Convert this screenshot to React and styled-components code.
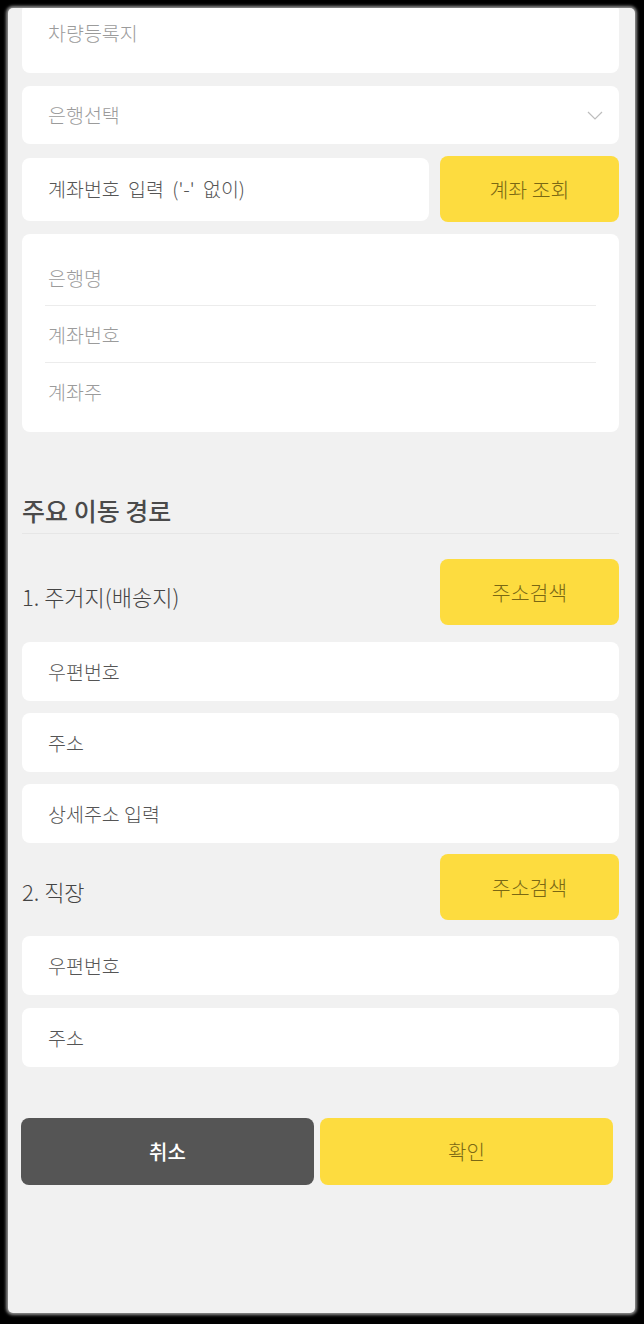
import React from "react";
import styled, { createGlobalStyle } from "styled-components";

const Global = createGlobalStyle`
  html, body { margin: 0; padding: 0; background: #000; }
  body { font-family: "Noto Sans CJK KR", "Noto Sans", sans-serif; }
  * { box-sizing: border-box; }
`;

const Screen = styled.div`
  width: 644px;
  height: 1324px;
  padding: 8px 9px 11px 8px;
  background: #000;
`;

const Panel = styled.div`
  width: 100%;
  height: 100%;
  background: #f1f1f1;
  border-radius: 5px;
  overflow: hidden;
  box-shadow: 0 0 3px 2px rgba(160, 160, 160, 0.9);
  padding: 0 16px 0 14px;
  display: flex;
  flex-direction: column;
`;

const Field = styled.div`
  margin-top: ${(p) => p.$mt ?? 12}px;
  height: ${(p) => p.$h ?? 59}px;
  background: #fff;
  border-radius: 8px;
  display: flex;
  align-items: ${(p) => (p.$top ? "flex-start" : "center")};
  justify-content: space-between;
  padding: ${(p) => (p.$top ? "16px 16px 0 26px" : "0 16px 0 26px")};
  font-size: 19.5px;
  font-weight: 300;
  line-height: 28px;
  word-spacing: ${(p) => p.$ws ?? 0}px;
  color: ${(p) => (p.$dark ? "#555" : "#9b9b9b")};
  flex: ${(p) => (p.$grow ? "1" : "none")};
`;

const Row = styled.div`
  margin-top: ${(p) => p.$mt}px;
  display: flex;
  align-items: center;
  gap: 11px;
`;

const YellowButton = styled.div`
  width: 179px;
  height: 66px;
  flex: none;
  background: #fddc3f;
  border-radius: 8px;
  display: flex;
  align-items: center;
  justify-content: center;
  font-size: 20.5px;
  font-weight: 300;
  color: #7a6814;
`;

const InfoCard = styled.div`
  margin-top: 12px;
  background: #fff;
  border-radius: 8px;
  padding: 15px 23px 13px;
`;

const InfoRow = styled.div`
  height: ${(p) => (p.$last ? 56 : 57)}px;
  display: flex;
  align-items: center;
  padding-left: 3px;
  font-size: 19.5px;
  font-weight: 300;
  color: #9b9b9b;
  border-bottom: ${(p) => (p.$last ? "none" : "1px solid #ececec")};
`;

const SectionTitle = styled.div`
  margin-top: 63px;
  font-size: 25px;
  line-height: 30px;
  font-weight: 500;
  color: #4a4a4a;
  padding-bottom: 8px;
  border-bottom: 1px solid #e6e6e6;
`;

const PlaceLabel = styled.div`
  flex: 1;
  font-size: 22px;
  font-weight: 300;
  color: #444;
  padding-top: 8px;
`;

const Chevron = () => (
  <svg width="16" height="9" viewBox="0 0 16 9" fill="none">
    <path d="M1 1l7 7 7-7" stroke="#bdbdbd" strokeWidth="1.2" />
  </svg>
);

const Actions = styled.div`
  margin-top: 51px;
  display: flex;
  gap: 6px;
  margin-left: -1px;
  margin-right: 6px;
`;

const ActionButton = styled.div`
  flex: 1;
  height: 67px;
  border-radius: 8px;
  display: flex;
  align-items: center;
  justify-content: center;
  font-size: 20px;
  font-weight: ${(p) => (p.$primary ? 300 : 500)};
  background: ${(p) => (p.$primary ? "#fddc3f" : "#555555")};
  color: ${(p) => (p.$primary ? "#7a6814" : "#ffffff")};
`;

export default function App() {
  return (
    <>
      <Global />
      <Screen>
        <Panel>
          <Field $mt={-5} $h={70} $top>차량등록지</Field>
          <Field $mt={13} $h={58}>
            은행선택
            <Chevron />
          </Field>
          <Row $mt={12}>
            <Field $mt={0} $h={63} $ws={4} $dark $grow>계좌번호 입력 ('-' 없이)</Field>
            <YellowButton>계좌 조회</YellowButton>
          </Row>
          <InfoCard>
            <InfoRow>은행명</InfoRow>
            <InfoRow>계좌번호</InfoRow>
            <InfoRow $last>계좌주</InfoRow>
          </InfoCard>
          <SectionTitle>주요 이동 경로</SectionTitle>
          <Row $mt={25}>
            <PlaceLabel>1. 주거지(배송지)</PlaceLabel>
            <YellowButton>주소검색</YellowButton>
          </Row>
          <Field $mt={17} $dark>우편번호</Field>
          <Field $dark>주소</Field>
          <Field $dark>상세주소 입력</Field>
          <Row $mt={11}>
            <PlaceLabel>2. 직장</PlaceLabel>
            <YellowButton>주소검색</YellowButton>
          </Row>
          <Field $mt={16} $dark>우편번호</Field>
          <Field $mt={13} $dark>주소</Field>
          <Actions>
            <ActionButton>취소</ActionButton>
            <ActionButton $primary>확인</ActionButton>
          </Actions>
        </Panel>
      </Screen>
    </>
  );
}
